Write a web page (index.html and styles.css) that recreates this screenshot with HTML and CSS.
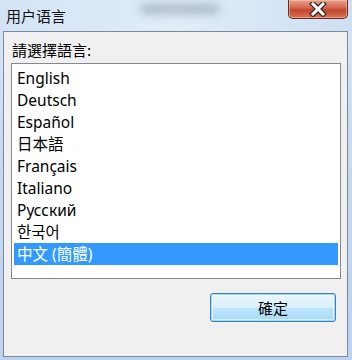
FILE: index.html
```html
<!DOCTYPE html>
<html lang="zh">

<head>
    <meta charset="utf-8">
    <meta name="viewport" content="width=device-width, initial-scale=1.0">
    <title>用户语言</title>
    <link rel="stylesheet" href="styles.css">
</head>

<body>
    <div class="vindue">
        <div class="titel">
            <span class="titeltekst">用户语言</span>
            <span class="sloret"></span>
            <button class="luk" aria-label="关闭">
                <svg width="22" height="15" viewBox="0 0 22 15">
                    <path d="M6 2 L16 12 M16 2 L6 12" stroke="#3a2a28" stroke-width="5.5" stroke-linecap="square" fill="none"/>
                    <path d="M6 2 L16 12 M16 2 L6 12" stroke="#ffffff" stroke-width="3" stroke-linecap="square" fill="none"/>
                </svg>
            </button>
        </div>
        <div class="indhold">
            <p class="label">請選擇語言:</p>
            <ul class="liste">
                <li>English</li>
                <li>Deutsch</li>
                <li>Español</li>
                <li>日本語</li>
                <li>Français</li>
                <li>Italiano</li>
                <li>Русский</li>
                <li>한국어</li>
                <li class="valgt">中文 (簡體)</li>
            </ul>
            <div class="knapper">
                <button class="ok">確定</button>
            </div>
        </div>
    </div>
</body>

</html>
```

FILE: styles.css
```css
body {
    margin: 0;
}

.vindue {
    width: 352px;
    height: 360px;
    display: flex;
    flex-direction: column;
    background: linear-gradient(#d9e7f6, #c6dbf1 40%, #bcd3ee);
    font-family: "Noto Sans", "Noto Sans CJK TC", sans-serif;
    color: #000;
}

.titel {
    height: 31px;
    display: flex;
    align-items: flex-start;
    background: linear-gradient(90deg, #d4e4f5, #e0ecf8 50%, #cfe0f3);
}

.titeltekst {
    font-family: "Noto Sans CJK SC", sans-serif;
    font-size: 15px;
    margin: 5px 0 0 6px;
    color: #111;
}

.sloret {
    width: 80px;
    height: 10px;
    margin: 4px 0 0 74px;
    background: #8a98a8;
    border-radius: 5px;
    filter: blur(5px);
    opacity: 0.6;
}

.luk {
    margin-left: auto;
    margin-right: 4px;
    width: 60px;
    height: 19px;
    padding: 0;
    display: flex;
    align-items: center;
    justify-content: center;
    border: 1px solid #6b2a22;
    border-top: none;
    border-radius: 0 0 5px 5px;
    background: linear-gradient(#e8a493, #d2624a 45%, #c2442c 55%, #d9764f);
    box-shadow: inset 0 0 0 1px rgba(255, 200, 180, 0.5);
}

.indhold {
    flex: 1;
    margin: 0 4px 3px 3px;
    border: 1px solid #7a8a9c;
    background: #f0f0f0;
    display: flex;
    flex-direction: column;
    padding: 0 6px 0 7px;
}

.label {
    margin: 6px 0 0 1px;
    font-family: "Noto Sans CJK TC", sans-serif;
    font-size: 15px;
    line-height: 24px;
}

.liste {
    list-style: none;
    margin: 1px 0 0;
    height: 211px;
    padding: 3px 2px 0;
    background: #fff;
    border: 1px solid #828790;
}

.liste li {
    height: 22px;
    line-height: 22px;
    padding-left: 3px;
    font-size: 15.5px;
}

.liste li.valgt {
    background: #3399ff;
    color: #fff;
}

.knapper {
    display: flex;
    justify-content: flex-end;
    padding: 14px 5px 0 0;
}

.ok {
    width: 126px;
    height: 29px;
    border: 1px solid #3c7fb1;
    border-radius: 3px;
    background: linear-gradient(#eaf6fd, #d9f0fc 50%, #bee6fd 51%, #a7d9f5);
    box-shadow: inset 0 0 0 1px #9fdcff, inset 0 0 0 2px rgba(255, 255, 255, 0.5);
    font-family: "Noto Sans CJK TC", sans-serif;
    font-size: 15px;
    color: #000;
    padding: 0;
}
```
